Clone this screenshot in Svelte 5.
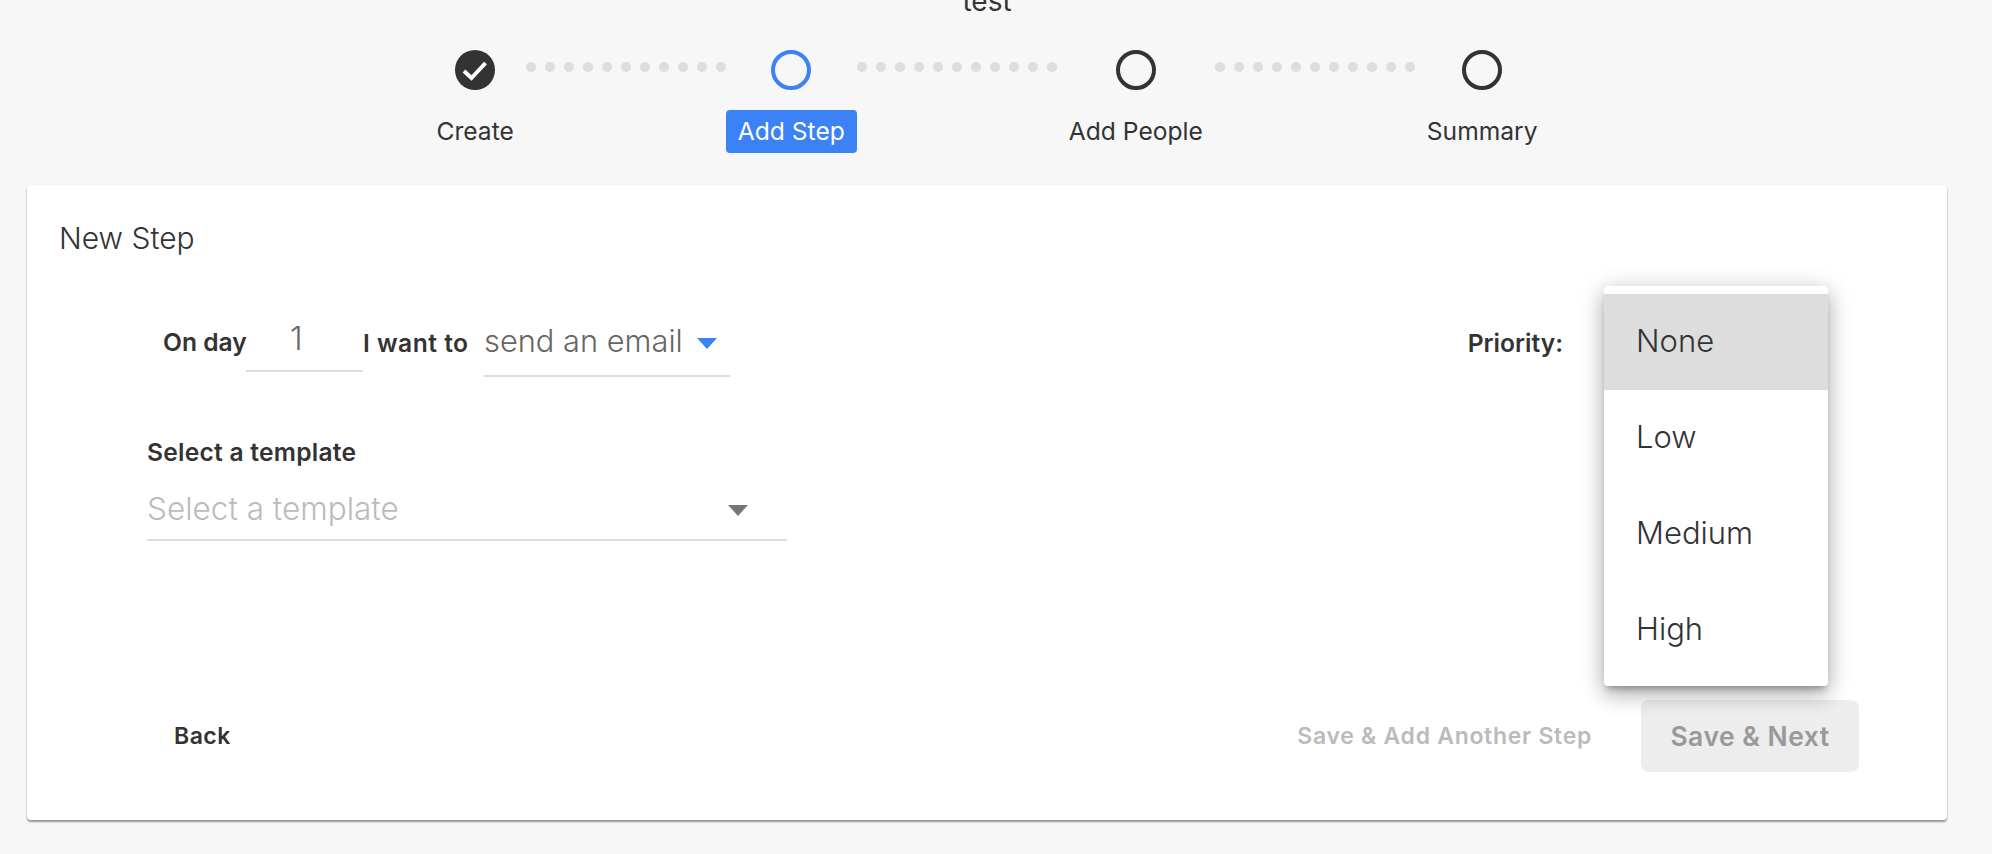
<script>
	const steps = [
		{ label: 'Create', state: 'done' },
		{ label: 'Add Step', state: 'active' },
		{ label: 'Add People', state: 'todo' },
		{ label: 'Summary', state: 'todo' }
	];
	const priorities = ['None', 'Low', 'Medium', 'High'];
</script>

<div class="page">
	<h1 class="title">test</h1>

	<div class="stepper">
		{#each steps as step, i}
			{#if i > 0}
				<div class="dots">
					{#each Array(11) as _}
						<span class="dot"></span>
					{/each}
				</div>
			{/if}
			<div class="step">
				{#if step.state === 'done'}
					<svg class="icon" width="40" height="40" viewBox="0 0 40 40">
						<circle cx="20" cy="20" r="20" fill="#333" />
						<path d="M9 21l7.5 7L30.5 13" fill="none" stroke="#fff" stroke-width="4" />
					</svg>
				{:else}
					<span class="ring" class:active={step.state === 'active'}></span>
				{/if}
				<span class="label" class:active={step.state === 'active'}>{step.label}</span>
			</div>
		{/each}
	</div>

	<section class="card">
		<h2 class="card-title">New Step</h2>

		<div class="sentence">
			<span class="strong on-day">On day</span>
			<div class="day-input">1</div>
			<span class="strong want">I want to</span>
			<div class="action-select">
				<span>send an email</span>
				<i class="caret blue"></i>
			</div>
			<span class="strong priority">Priority:</span>
		</div>

		<div class="template">
			<div class="strong">Select a template</div>
			<div class="template-select">
				<span>Select a template</span>
				<i class="caret"></i>
			</div>
		</div>

		<div class="footer">
			<button class="back">Back</button>
			<button class="another">Save &amp; Add Another Step</button>
			<button class="next">Save &amp; Next</button>
		</div>

		<ul class="menu">
			{#each priorities as p, i}
				<li class:selected={i === 0}>{p}</li>
			{/each}
		</ul>
	</section>
</div>

<style>
	:global(body) {
		background: #f7f7f7;
		overflow: hidden;
	}
	.page {
		box-sizing: border-box;
		width: 1992px;
		height: 854px;
		padding: 0 45px 0 27px;
		font-family: Inter, 'Liberation Sans', sans-serif;
		color: #333;
		overflow: hidden;
	}
	.title {
		margin: -33px 0 0;
		height: 83px;
		line-height: 68px;
		font-size: 28px;
		font-weight: 400;
		text-align: center;
	}
	.stepper {
		display: flex;
		justify-content: center;
		height: 135px;
	}
	.step {
		display: flex;
		flex-direction: column;
		align-items: center;
		gap: 20px;
	}
	.icon {
		display: block;
	}
	.ring {
		box-sizing: border-box;
		display: block;
		width: 40px;
		height: 40px;
		border: 4px solid #333;
		border-radius: 50%;
	}
	.ring.active {
		border-color: #3b82f6;
	}
	.label {
		padding: 0 12px;
		height: 43px;
		line-height: 43px;
		font-size: 24.6px;
		border-radius: 4px;
	}
	.label.active {
		background: #3b82f6;
		color: #fff;
	}
	.dots {
		box-sizing: border-box;
		width: 200px;
		height: 34px;
		padding-top: 12px;
		display: flex;
		justify-content: space-between;
		align-items: flex-start;
	}
	.dot {
		width: 10px;
		height: 10px;
		border-radius: 50%;
		background: #ddd;
	}
	.card {
		position: relative;
		box-sizing: border-box;
		height: 635px;
		padding: 36px 88px 48px 33px;
		background: #fff;
		border-radius: 4px;
		box-shadow: 0 2px 2px rgba(0, 0, 0, 0.4), 0 0 2px rgba(0, 0, 0, 0.06);
		display: flex;
		flex-direction: column;
	}
	.card-title {
		margin: 0 0 0 -1px;
		font-size: 30px;
		line-height: 34px;
		font-weight: 300;
	}
	.strong {
		font-size: 24.6px;
		font-weight: 600;
		line-height: 30px;
		white-space: nowrap;
	}
	.sentence {
		display: flex;
		align-items: flex-start;
		margin: 63px 0 0 103px;
	}
	.on-day {
		width: 83px;
		margin-top: 9px;
	}
	.want {
		width: 121px;
		letter-spacing: 0.5px;
		margin-top: 10px;
	}
	.day-input {
		box-sizing: border-box;
		width: 117px;
		height: 54px;
		padding-left: 44px;
		line-height: 42px;
		font-size: 32px;
		font-weight: 300;
		color: #666;
		border-bottom: 2px solid #ddd;
	}
	.action-select {
		box-sizing: border-box;
		width: 246px;
		height: 59px;
		display: flex;
		align-items: flex-start;
		line-height: 46px;
		font-size: 30.8px;
		font-weight: 300;
		color: #666;
		border-bottom: 2px solid #ddd;
	}
	.priority {
		margin-left: auto;
		margin-right: 296px;
		margin-top: 10px;
	}
	.caret {
		display: block;
		width: 0;
		height: 0;
		border-left: 10px solid transparent;
		border-right: 10px solid transparent;
		border-top: 11px solid #777;
	}
	.caret.blue {
		margin: 20px 0 0 14px;
		border-top-color: #3b82f6;
	}
	.template {
		width: 640px;
		margin: 60px 0 0 87px;
	}
	.template .strong {
		letter-spacing: 0.25px;
	}
	.template-select {
		box-sizing: border-box;
		height: 74px;
		margin-top: 0;
		padding-top: 18px;
		display: flex;
		justify-content: space-between;
		line-height: 48px;
		font-size: 31.5px;
		font-weight: 300;
		color: #bbb;
		border-bottom: 2px solid #ddd;
	}
	.template-select .caret {
		margin: 20px 39px 0 0;
	}
	.footer {
		margin-top: auto;
		display: flex;
		align-items: center;
	}
	button {
		border: 0;
		background: none;
		font-family: inherit;
		font-weight: 600;
		letter-spacing: 0.5px;
		padding: 0;
	}
	.back {
		margin-left: 114px;
		font-size: 23px;
		color: #333;
	}
	.another {
		margin-left: auto;
		font-size: 23px;
		letter-spacing: 0.7px;
		color: #bbb;
	}
	.next {
		box-sizing: border-box;
		width: 218px;
		height: 72px;
		margin-left: 49px;
		font-size: 26.5px;
		color: #999;
		background: #ededed;
		border-radius: 8px;
	}
	.menu {
		position: absolute;
		left: 1577px;
		top: 101px;
		width: 224px;
		margin: 0;
		padding: 8px 0;
		list-style: none;
		background: #fff;
		border-radius: 4px;
		box-shadow: 0 6px 6px -3px rgba(0, 0, 0, 0.28), 0 10px 20px 1px rgba(0, 0, 0, 0.18), 0 3px 26px 2px rgba(0, 0, 0, 0.14);
	}
	.menu li {
		height: 96px;
		padding-left: 32px;
		line-height: 94px;
		font-size: 31px;
		font-weight: 300;
	}
	.menu li.selected {
		background: #ddd;
	}
</style>
